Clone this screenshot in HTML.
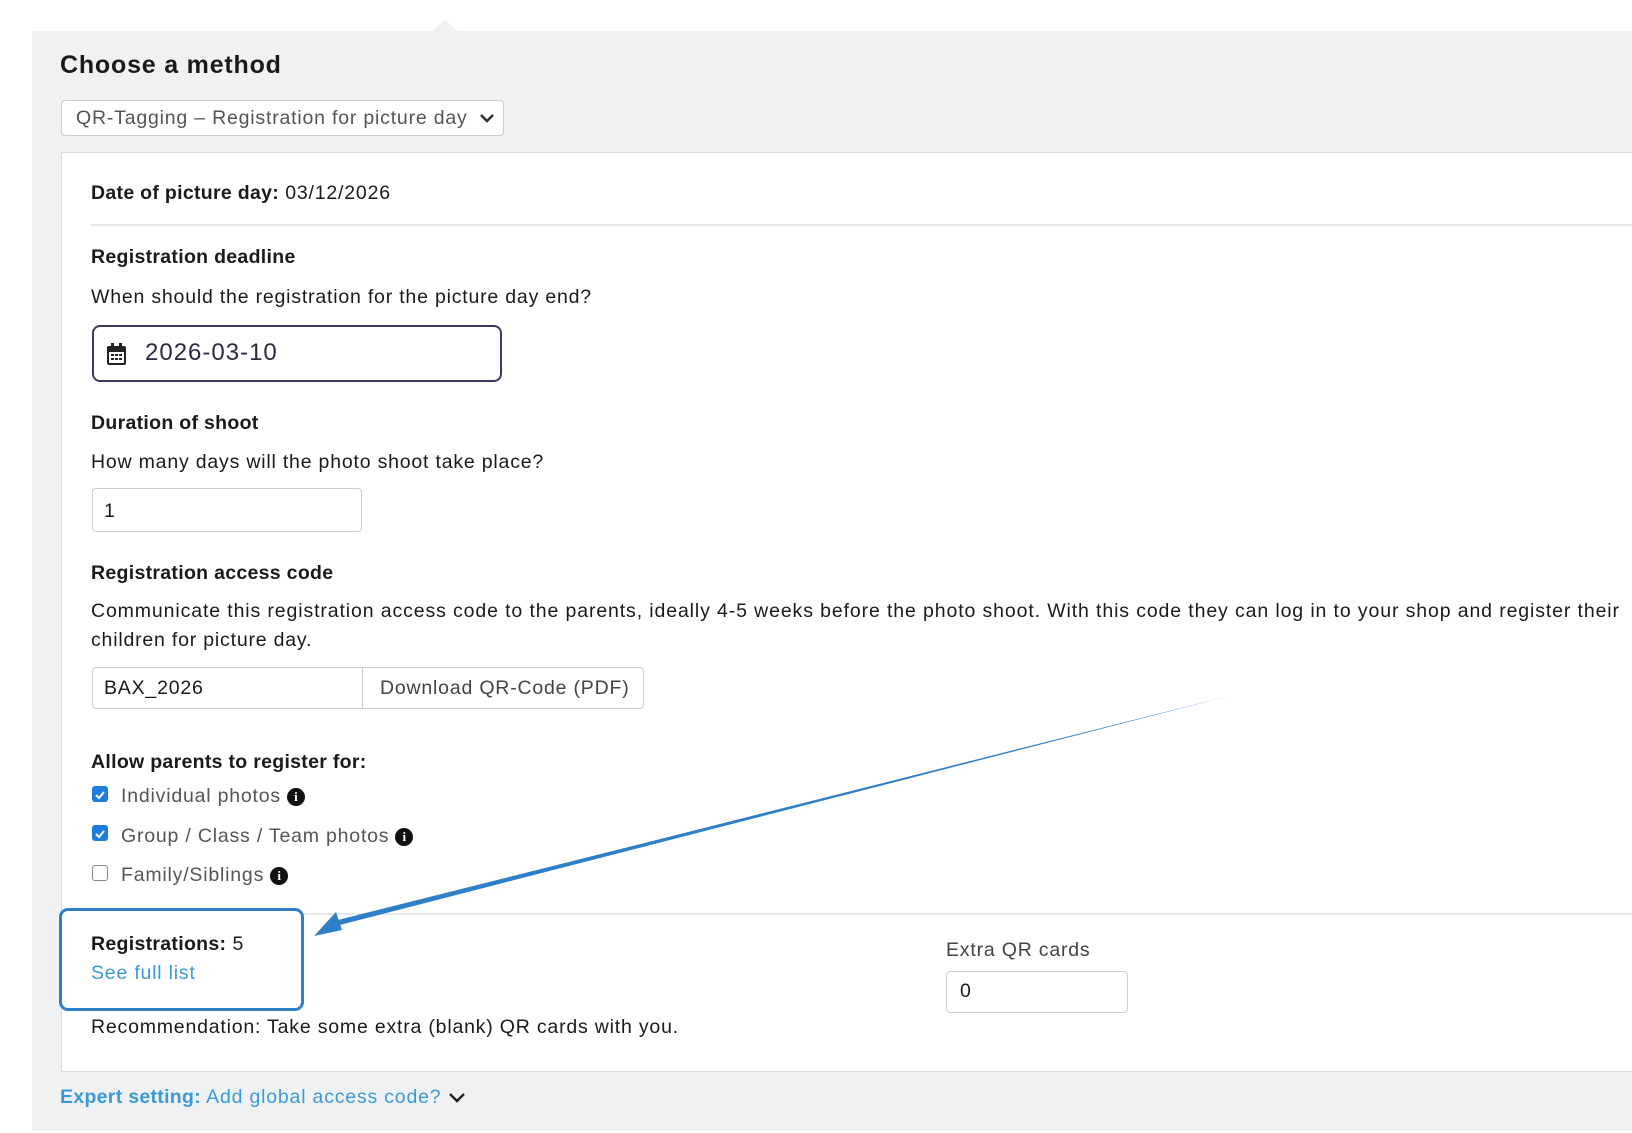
<!DOCTYPE html>
<html><head><meta charset="utf-8"><style>
*{box-sizing:border-box;margin:0;padding:0}
body{width:1632px;height:1133px;background:#fff;font-family:"Liberation Sans",Arial,sans-serif;color:#1a1a1a;position:relative;overflow:hidden;font-size:19.5px;letter-spacing:0.8px}
.a{position:absolute;white-space:nowrap;line-height:1}
.gray{position:absolute;left:32px;top:31px;right:0;bottom:2px;background:#f0f1f3}
.notch{position:absolute;left:433px;top:19px;width:0;height:0;border-left:12px solid transparent;border-right:12px solid transparent;border-bottom:12px solid #f0f1f3}
.card{position:absolute;left:61px;top:152px;right:-2px;height:920px;background:#fff;border:1px solid #dcdde0}
.box{position:absolute;background:#fff;border:1px solid #ccc;border-radius:4px}
.b{font-weight:bold;letter-spacing:0.3px}
.hr{position:absolute;left:91px;right:0;height:2px;background:#e6e7ea}
.cb{position:absolute;width:16px;height:16px;border-radius:3px}
.on{background:#1e7be0}
.off{border:1.5px solid #888;background:#fff}
.info{display:inline-block;width:18px;height:18px;border-radius:50%;background:#111;color:#fff;font-size:13px;font-weight:bold;text-align:center;line-height:18px;vertical-align:1px;margin-left:6px;font-family:"Liberation Serif",serif;letter-spacing:0}
</style></head><body>
<div class="notch"></div>
<div class="gray"></div>
<div class="a b" style="left:60px;top:53px;font-size:25px;letter-spacing:0.8px">Choose a method</div>
<div class="box" style="left:61px;top:100px;width:443px;height:36px"></div>
<div class="a" style="left:76px;top:109px;color:#555">QR-Tagging – Registration for picture day</div>
<svg class="a" style="left:479px;top:112px" width="16" height="12" viewBox="0 0 16 12"><path d="M2 3l6 6 6-6" stroke="#333" stroke-width="2.6" fill="none"/></svg>
<div class="card"></div>
<div class="a" style="left:91px;top:184px"><span class="b">Date of picture day:</span> 03/12/2026</div>
<div class="hr" style="top:224px"></div>
<div class="a b" style="left:91px;top:248px">Registration deadline</div>
<div class="a" style="left:91px;top:288px">When should the registration for the picture day end?</div>
<div class="a" style="left:92px;top:325px;width:410px;height:57px;border:2px solid #3b3a5c;border-radius:8px"></div>
<svg class="a" style="left:106px;top:343px" width="21" height="23" viewBox="0 0 21 23"><rect x="1" y="3" width="19" height="19" rx="2" fill="#222"/><rect x="5" y="0" width="3" height="6" fill="#222"/><rect x="13" y="0" width="3" height="6" fill="#222"/><rect x="3" y="9" width="15" height="11" fill="#fff"/><g fill="#222"><rect x="5" y="11" width="3" height="2"/><rect x="9" y="11" width="3" height="2"/><rect x="13" y="11" width="3" height="2"/><rect x="5" y="15" width="3" height="2"/><rect x="9" y="15" width="3" height="2"/><rect x="13" y="15" width="3" height="2"/></g></svg>
<div class="a" style="left:145px;top:341px;font-size:24px;letter-spacing:1px;color:#2b2a40">2026-03-10</div>
<div class="a b" style="left:91px;top:414px">Duration of shoot</div>
<div class="a" style="left:91px;top:453px">How many days will the photo shoot take place?</div>
<div class="box" style="left:92px;top:488px;width:270px;height:44px"></div>
<div class="a" style="left:104px;top:502px">1</div>
<div class="a b" style="left:91px;top:564px">Registration access code</div>
<div class="a" style="left:91px;top:602px;letter-spacing:0.88px">Communicate this registration access code to the parents, ideally 4-5 weeks before the photo shoot. With this code they can log in to your shop and register their</div>
<div class="a" style="left:91px;top:631px">children for picture day.</div>
<div class="box" style="left:92px;top:667px;width:552px;height:42px"></div>
<div class="a" style="left:362px;top:668px;width:1px;height:40px;background:#ccc"></div>
<div class="a" style="left:104px;top:679px">BAX_2026</div>
<div class="a" style="left:380px;top:679px;color:#444">Download QR-Code (PDF)</div>
<div class="a b" style="left:91px;top:753px">Allow parents to register for:</div>
<div class="cb on" style="left:92px;top:786px"><svg width="16" height="16"><path d="M4 8l3 3 5-6" stroke="#fff" stroke-width="2" fill="none"/></svg></div>
<div class="a" style="left:121px;top:787px;color:#555">Individual photos<span class="info">i</span></div>
<div class="cb on" style="left:92px;top:825px"><svg width="16" height="16"><path d="M4 8l3 3 5-6" stroke="#fff" stroke-width="2" fill="none"/></svg></div>
<div class="a" style="left:121px;top:827px;color:#555">Group / Class / Team photos<span class="info">i</span></div>
<div class="cb off" style="left:92px;top:865px"></div>
<div class="a" style="left:121px;top:866px;color:#555">Family/Siblings<span class="info">i</span></div>
<div class="hr" style="top:913px"></div>
<div class="a" style="left:59px;top:908px;width:245px;height:103px;border:3px solid #2f7fc8;border-radius:9px;background:#fff"></div>
<div class="a" style="left:91px;top:935px"><span class="b">Registrations:</span> 5</div>
<div class="a" style="left:91px;top:964px;color:#3b9ad6">See full list</div>
<div class="a" style="left:946px;top:941px;color:#444">Extra QR cards</div>
<div class="box" style="left:946px;top:971px;width:182px;height:42px"></div>
<div class="a" style="left:960px;top:982px">0</div>
<div class="a" style="left:91px;top:1018px">Recommendation: Take some extra (blank) QR cards with you.</div>
<div class="a" style="left:60px;top:1088px;color:#3b9ad6"><span class="b">Expert setting:</span> Add global access code? <svg width="18" height="12" viewBox="0 0 18 12" style="vertical-align:-1px"><path d="M2 2l7 7 7-7" stroke="#222" stroke-width="2.4" fill="none"/></svg></div>
<svg class="a" style="left:0;top:0" width="1632" height="1133"><polygon points="1233,695 332,927 330,922" fill="#2f7fc8"/><polygon points="314,936 336,912 342,930" fill="#2f7fc8"/></svg>
</body></html>
